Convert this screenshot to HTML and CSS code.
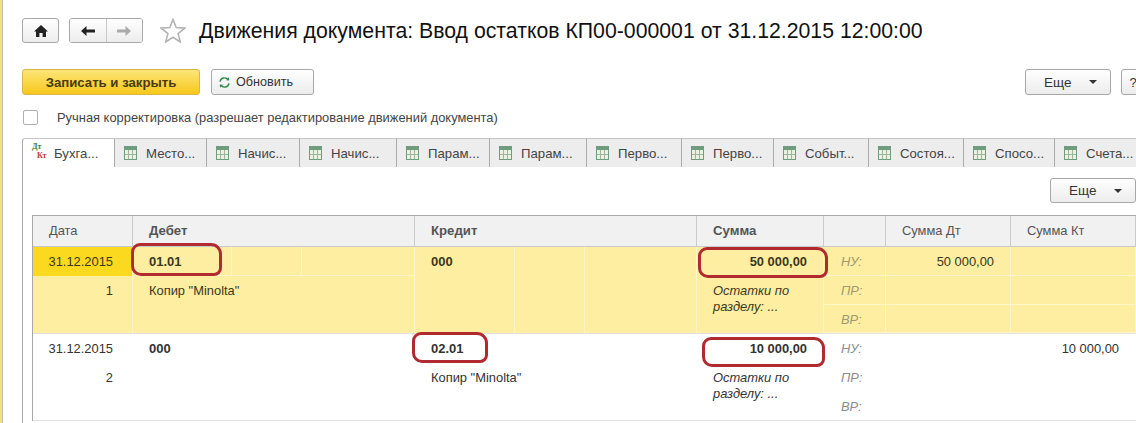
FILE: index.html
```html
<!DOCTYPE html>
<html lang="ru">
<head>
  <meta charset="UTF-8" />
  <title>Движения документа</title>
  <link rel="stylesheet" href="styles.css">
</head>
<body>
  <div class="page">
    <div class="head">
      <button class="nav-btn home-btn">
        <svg width="16" height="14" viewBox="0 0 16 14"><path d="M8 1 L15 7.5 L13 7.5 L13 13 L9.6 13 L9.6 9 L6.4 9 L6.4 13 L3 13 L3 7.5 L1 7.5 Z" fill="#222"/></svg>
      </button>
      <div class="nav-group">
        <button class="nav-btn">
          <svg width="16" height="12" viewBox="0 0 16 12"><path d="M1 6 L6.5 1 L6.5 4.6 L15 4.6 L15 7.4 L6.5 7.4 L6.5 11 Z" fill="#222"/></svg>
        </button>
        <button class="nav-btn">
          <svg width="16" height="12" viewBox="0 0 16 12"><path d="M15 6 L9.5 1 L9.5 4.6 L1 4.6 L1 7.4 L9.5 7.4 L9.5 11 Z" fill="#aaa"/></svg>
        </button>
      </div>
      <svg class="star" width="26" height="25" viewBox="0 0 26 25"><path d="M13 1.5 L16.2 9.6 L24.8 10.1 L18.1 15.6 L20.3 24 L13 19.3 L5.7 24 L7.9 15.6 L1.2 10.1 L9.8 9.6 Z" fill="#fff" stroke="#b4b4b4" stroke-width="1.6"/></svg>
      <h1>Движения документа: Ввод остатков КП00-000001 от 31.12.2015 12:00:00</h1>
    </div>

    <div class="actions">
      <button class="btn btn-primary">Записать и закрыть</button>
      <button class="btn btn-refresh">
        <svg width="13" height="13" viewBox="0 0 15 14" fill="none" stroke="#2f8a4c" stroke-width="1.7"><path d="M2.3 6 A5.2 5.2 0 0 1 11.6 3.8"/><path d="M12.7 8 A5.2 5.2 0 0 1 3.4 10.2"/><path d="M9.4 4.4 L13 4.6 L12.6 1" fill="#2f8a4c" stroke="none"/><path d="M5.6 9.6 L2 9.4 L2.4 13" fill="#2f8a4c" stroke="none"/></svg>
        Обновить
      </button>
      <div class="actions-right">
        <button class="btn btn-more">Еще <i class="caret"></i></button>
        <button class="btn btn-help">?</button>
      </div>
    </div>

    <label class="check-row">
      <span class="checkbox"></span>
      Ручная корректировка (разрешает редактирование движений документа)
    </label>

    <div class="tabs">
      <div class="tab tab-active w93">
        <span class="dtkt"><span class="dt">Дт</span><span class="kt">Кт</span></span>Бухга...
      </div>
      <div class="tab w92"><i class="grid-icon"></i>Место...</div>
      <div class="tab w93"><i class="grid-icon"></i>Начис...</div>
      <div class="tab w97"><i class="grid-icon"></i>Начис...</div>
      <div class="tab w93"><i class="grid-icon"></i>Парам...</div>
      <div class="tab w97"><i class="grid-icon"></i>Парам...</div>
      <div class="tab w95"><i class="grid-icon"></i>Перво...</div>
      <div class="tab w92"><i class="grid-icon"></i>Перво...</div>
      <div class="tab w95"><i class="grid-icon"></i>Событ...</div>
      <div class="tab w95"><i class="grid-icon"></i>Состоя...</div>
      <div class="tab w91"><i class="grid-icon"></i>Спосо...</div>
      <div class="tab w91"><i class="grid-icon"></i>Счета...</div>
    </div>

    <div class="panel">
      <div class="panel-bar">
        <button class="btn btn-more btn-more-table">Еще <i class="caret"></i></button>
      </div>

      <div class="table">
        <div class="table-head">
          <div class="th">Дата</div>
          <div class="th th-bold">Дебет</div>
          <div class="th th-bold">Кредит</div>
          <div class="th th-bold">Сумма</div>
          <div class="th"></div>
          <div class="th">Сумма Дт</div>
          <div class="th">Сумма Кт</div>
        </div>

        <div class="entry entry-active">
          <div class="td td-date td-current">31.12.2015</div>
          <div class="td td-acc"><b class="sub sub-a">01.01</b><span class="sub sub-b"></span><span class="sub sub-c"></span></div>
          <div class="td td-acc td-credit"><b class="sub sub-a">000</b><span class="sub sub-b"></span><span class="sub sub-c"></span></div>
          <div class="td td-sum">50 000,00</div>
          <div class="td td-reg">НУ:</div>
          <div class="td td-num">50 000,00</div>
          <div class="td td-num"></div>
          <div class="td td-date td-line">1</div>
          <div class="td td-sub">Копир "Minolta"</div>
          <div class="td td-note">Остатки по разделу: ...</div>
          <div class="td td-reg">ПР:</div>
          <div class="td td-num"></div>
          <div class="td td-num"></div>
          <div class="td td-reg">ВР:</div>
          <div class="td td-num"></div>
          <div class="td td-num"></div>
        </div>

        <div class="entry">
          <div class="td td-date">31.12.2015</div>
          <div class="td td-acc"><b class="sub sub-a">000</b></div>
          <div class="td td-acc td-credit td-plain"><b class="credit-code">02.01</b><span class="credit-name">Копир "Minolta"</span></div>
          <div class="td td-sum">10 000,00</div>
          <div class="td td-reg">НУ:</div>
          <div class="td td-num"></div>
          <div class="td td-num">10 000,00</div>
          <div class="td td-date td-line">2</div>
          <div class="td td-sub"></div>
          <div class="td td-note">Остатки по разделу: ...</div>
          <div class="td td-reg">ПР:</div>
          <div class="td td-num"></div>
          <div class="td td-num"></div>
          <div class="td td-reg">ВР:</div>
          <div class="td td-num"></div>
          <div class="td td-num"></div>
        </div>
      </div>
    </div>

    <!-- red marks drawn on top of the screenshot -->
    <div class="mark mark-debit"></div>
    <div class="mark mark-credit"></div>
    <div class="mark mark-sum1"></div>
    <div class="mark mark-sum2"></div>
  </div>
</body>
</html>
```

FILE: styles.css
```css
* {
  box-sizing: border-box;
}
html, body {
  margin: 0;
  height: 423px;
  overflow: hidden;
  background: #fff;
}
body {
  font-family: "Liberation Sans", Arial, sans-serif;
  font-size: 12.9px;
  color: #333;
}
button {
  font-family: inherit;
  margin: 0;
  padding: 0;
  cursor: pointer;
}
.page {
  position: relative;
  width: 1136px;
  height: 423px;
  padding: 18px 0 0 19px;
  border-left: 2px solid #f2e27e;
  box-shadow: inset 1px 0 0 #bdbdbd;
  overflow: hidden;
}

/* top line */
.head {
  display: flex;
  align-items: center;
  height: 25px;
  margin-left: 1px;
}
.nav-btn {
  display: flex;
  align-items: center;
  justify-content: center;
  height: 25px;
  border: none;
  background: linear-gradient(#fff, #ececec);
}
.home-btn {
  width: 37px;
  border: 1px solid #a8a8a8;
  border-radius: 3px;
}
.nav-group {
  display: flex;
  width: 74px;
  height: 25px;
  margin-left: 10px;
  border: 1px solid #a8a8a8;
  border-radius: 3px;
  overflow: hidden;
}
.nav-group .nav-btn {
  flex: 1;
  height: 23px;
}
.nav-group .nav-btn + .nav-btn {
  border-left: 1px solid #c8c8c8;
}
.star {
  margin-left: 17px;
}
h1 {
  margin: 2px 0 0 13px;
  font-size: 21.25px;
  font-weight: normal;
  color: #111;
  white-space: nowrap;
}

/* command bar */
.actions {
  display: flex;
  align-items: center;
  height: 26px;
  margin: 26px 0 0 1px;
}
.btn {
  height: 26px;
  border: 1px solid #a8a8a8;
  border-radius: 3px;
  background: linear-gradient(#fff, #ececec);
  font-size: 12.6px;
  color: #333;
}
.btn-primary {
  width: 178px;
  border-color: #d9b64a;
  background: linear-gradient(#fce578, #f7c81c);
  font-size: 13.2px;
  font-weight: bold;
  color: #4a3a10;
}
.btn-refresh {
  display: flex;
  align-items: center;
  gap: 5px;
  width: 103px;
  margin-left: 11px;
  padding-left: 6px;
}
.actions-right {
  display: flex;
  gap: 10px;
  margin-left: auto;
  margin-right: -15px;
}
.btn-more {
  display: flex;
  align-items: center;
  justify-content: space-between;
  width: 86px;
  padding: 0 20px 0 18px;
  font-size: 13.5px;
}
.btn-help {
  width: 30px;
  padding-right: 6px;
  font-size: 13px;
}
.caret {
  width: 0;
  height: 0;
  margin-right: -7px;
  border-left: 4px solid transparent;
  border-right: 4px solid transparent;
  border-top: 4px solid #333;
}
.check-row {
  display: flex;
  align-items: center;
  height: 15px;
  margin: 15px 0 0 2px;
  color: #444;
}
.checkbox {
  width: 15px;
  height: 15px;
  margin-right: 19px;
  border: 1px solid #b0b0b0;
  border-radius: 2px;
  background: #fff;
}

/* tabs */
.tabs {
  display: flex;
  height: 29px;
  margin: 13px 0 0 1px;
  border-bottom: 1px solid #ababab;
  font-size: 13.2px;
  white-space: nowrap;
}
.tab {
  display: flex;
  flex: none;
  align-items: center;
  height: 29px;
  padding-left: 9px;
  border-top: 1px solid #c4c4c4;
  border-right: 1px solid #ababab;
  background: #ededed;
  color: #444;
}
.w91 { width: 91px; }
.w92 { width: 92px; }
.w93 { width: 93px; }
.w95 { width: 95px; }
.w97 { width: 97px; }
.tab-active {
  height: 29px;
  padding-left: 9px;
  border-left: 1px solid #ababab;
  border-radius: 3px 0 0 0;
  background: #fff;
}
.grid-icon {
  flex: none;
  width: 13px;
  height: 14px;
  margin-right: 9px;
  border: 1px solid #6f9c7e;
  background:
    linear-gradient(#6f9c7e, #6f9c7e) 0 0 / 100% 3px no-repeat,
    linear-gradient(#9db59f, #9db59f) 0 7px / 100% 1px no-repeat,
    linear-gradient(#9db59f, #9db59f) 3px 0 / 1px 100% no-repeat,
    linear-gradient(#9db59f, #9db59f) 7px 0 / 1px 100% no-repeat,
    #eaf1df;
}
.dtkt {
  display: flex;
  flex: none;
  flex-direction: column;
  width: 17px;
  margin: -4px 5px 0 0;
  font-size: 8px;
  font-weight: bold;
  line-height: 9px;
  font-family: "Liberation Serif", serif;
}
.dt {
  color: #3c7d3c;
}
.kt {
  margin-left: 5px;
  color: #b83a3a;
}

/* panel with the table */
.panel {
  height: 260px;
  margin-left: 1px;
  margin-top: -1px;
  padding: 12px 0 0 9px;
  border-left: 1px solid #ababab;
  position: relative;
}
.panel-bar {
  display: flex;
  justify-content: flex-end;
  height: 25px;
}
.btn-more-table {
  height: 25px;
  margin-right: 0;
}
.table {
  width: 1104px;
  margin-top: 12px;
  border-left: 1px solid #a8a8a8;
  border-top: 1px solid #a8a8a8;
}
.table-head,
.entry {
  display: grid;
  grid-template-columns: 100px 282px 282px 127px 62px 125px 125px;
}
.table-head {
  height: 31px;
  border-bottom: 1px solid #c9c9c9;
  background: #f1f1f1;
}
.th {
  padding: 7px 0 0 16px;
  border-right: 1px solid #cbcbcb;
  color: #555;
}
.th-bold {
  font-size: 13.2px;
  font-weight: bold;
}
.entry {
  grid-template-rows: 29px 29px 28px;
  border-bottom: 1px solid #e2e2e2;
  line-height: 29px;
}
.td {
  white-space: nowrap;
  border-right: 1px solid #fff;
}
.td-date {
  padding-right: 19px;
  text-align: right;
}
.td-line {
  grid-row: span 2;
}
.td-acc {
  display: flex;
  border-bottom: 1px solid #fff;
}
.td-credit {
  grid-row: span 3;
  border-bottom: none;
  align-items: stretch;
}
.td-plain {
  display: block;
  padding-left: 16px;
}
.credit-code {
  display: block;
  height: 29px;
}
.credit-name {
  display: block;
}
.sub {
  border-right: 1px solid #fff;
}
.entry-active .sub {
  border-right-color: #fff6c8;
}
.sub-a {
  flex: none;
  width: 99px;
  padding-left: 16px;
}
.td-credit .sub-a {
  width: 100px;
}
.sub-b {
  flex: none;
  width: 70px;
}
.entry-active .sub-c {
  flex: 1;
  border-right: none;
}
b {
  font-size: 13px;
}
.td-sub {
  grid-row: span 2;
  padding-left: 16px;
}
.td-sum {
  padding-right: 16px;
  text-align: right;
  font-weight: bold;
}
.td-note {
  grid-row: span 2;
  padding: 7px 20px 0 16px;
  font-style: italic;
  white-space: normal;
  line-height: 16px;
}
.td-reg {
  padding-left: 17px;
  font-style: italic;
  color: #8c8c8c;
  border-bottom: 1px solid #fff;
}
.td-num {
  padding-right: 16px;
  text-align: right;
  border-bottom: 1px solid #fff;
}
.entry-active {
  background: #fdeea1;
  color: #3c3820;
}
.entry-active .td {
  border-right-color: #fff6c8;
}
.entry-active .td-acc,
.entry-active .td-reg,
.entry-active .td-num {
  border-bottom-color: #fff6c8;
}
.entry-active .td-credit {
  border-bottom: none;
}
.entry-active .td-reg {
  color: #a09a6c;
}
.td-current {
  background: #fbd91f;
}

/* hand drawn red frames */
.mark {
  position: absolute;
  border: 3px solid #b02a30;
  border-radius: 9px 11px 8px 10px;
}
.mark-debit {
  left: 129px;
  top: 243px;
  width: 91px;
  height: 33px;
}
.mark-credit {
  left: 410px;
  top: 332px;
  width: 76px;
  height: 31px;
}
.mark-sum1 {
  left: 696px;
  top: 247px;
  width: 130px;
  height: 31px;
}
.mark-sum2 {
  left: 700px;
  top: 337px;
  width: 123px;
  height: 30px;
}
```
